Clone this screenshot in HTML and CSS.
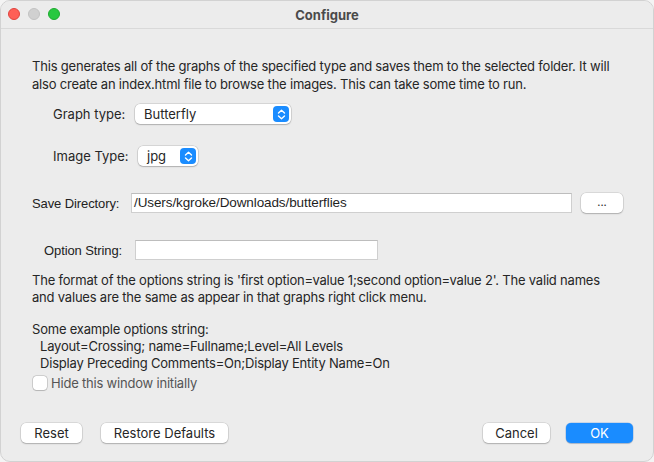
FILE: index.html
```html
<!DOCTYPE html>
<html>
<head>
<meta charset="utf-8">
<link rel="stylesheet" href="styles.css">
</head>
<body>
<div class="window">
  <div class="titlebar">
    <div class="lights">
      <span class="light red"></span>
      <span class="light gray"></span>
      <span class="light green"></span>
    </div>
    <div class="title">Configure</div>
  </div>
  <div class="content">
    <p class="intro">This generates all of the graphs of the specified type and saves them to the selected folder. It will also create an index.html file to browse the images. This can take some time to run.</p>

    <div class="row row-graph">
      <span class="label">Graph type:</span>
      <div class="popup popup-wide">
        <span class="popup-text">Butterfly</span>
        <span class="chev"><svg width="9" height="11" viewBox="0 0 9 11"><path d="M1.5 4 L4.5 1.3 L7.5 4 M1.5 7 L4.5 9.7 L7.5 7" fill="none" stroke="#fff" stroke-width="1.4" stroke-linecap="round" stroke-linejoin="round"/></svg></span>
      </div>
    </div>

    <div class="row row-image">
      <span class="label">Image Type:</span>
      <div class="popup popup-small">
        <span class="popup-text">jpg</span>
        <span class="chev"><svg width="9" height="11" viewBox="0 0 9 11"><path d="M1.5 4 L4.5 1.3 L7.5 4 M1.5 7 L4.5 9.7 L7.5 7" fill="none" stroke="#fff" stroke-width="1.4" stroke-linecap="round" stroke-linejoin="round"/></svg></span>
      </div>
    </div>

    <div class="row row-save">
      <span class="label narrow">Save Directory:</span>
      <div class="field field-path">/Users/kgroke/Downloads/butterflies</div>
      <div class="btn btn-dots">...</div>
    </div>

    <div class="row row-option">
      <span class="label narrow">Option String:</span>
      <div class="field field-option"></div>
    </div>

    <p class="desc">The format of the options string is 'first option=value 1;second option=value 2'. The valid names and values are the same as appear in that graphs right click menu.</p>

    <div class="examples">
      <div>Some example options string:</div>
      <div class="ex">Layout=Crossing; name=Fullname;Level=All Levels</div>
      <div class="ex">Display Preceding Comments=On;Display Entity Name=On</div>
    </div>

    <div class="check-row">
      <span class="checkbox"></span>
      <span class="check-label">Hide this window initially</span>
    </div>

    <div class="buttons">
      <div class="btn btn-reset">Reset</div>
      <div class="btn btn-restore">Restore Defaults</div>
      <div class="spacer"></div>
      <div class="btn btn-cancel">Cancel</div>
      <div class="btn btn-ok">OK</div>
    </div>
  </div>
</div>
</body>
</html>
```
FILE: styles.css
```css
* { box-sizing: border-box; }
html, body { margin: 0; padding: 0; }
body {
  width: 654px;
  height: 462px;
  background: #f4f4f4;
  font-family: "Inter", "Noto Sans", sans-serif;
  font-size: 13px;
  color: #262626;
  overflow: hidden;
}
.window {
  width: 654px;
  height: 462px;
  background: #ececec;
  border-radius: 10px;
  border: 1px solid #d2d2d2;
  overflow: hidden;
  display: flex;
  flex-direction: column;
}
.titlebar {
  height: 28px;
  flex: none;
  position: relative;
  display: flex;
  align-items: center;
  justify-content: center;
  border-bottom: 1px solid #d9d9d9;
  background: #ececec;
}
.lights {
  position: absolute;
  left: 7px;
  top: 7px;
  display: flex;
  gap: 8px;
}
.light {
  width: 12px;
  height: 12px;
  border-radius: 50%;
  display: block;
}
.red { background: #fe5f57; border: 0.5px solid #e0443e; }
.gray { background: #d0d0d0; border: 0.5px solid #c2c2c2; }
.green { background: #28c840; border: 0.5px solid #1eab2f; }
.title {
  font-weight: 700;
  font-size: 13px;
  color: #4a4a4a;
}
.content {
  padding: 28px 20px 0 31px;
  display: flex;
  flex-direction: column;
}
p { margin: 0; }
.intro {
  line-height: 18px;
  width: 600px;
  letter-spacing: -0.2px;
}
.row {
  display: flex;
  align-items: center;
  height: 20px;
}
.row-graph { margin-top: 11px; padding-left: 21px; }
.row-graph .label { width: 82px; }
.row-image { margin-top: 22px; padding-left: 21px; }
.row-image .label { width: 85px; }
.row-save { margin-top: 27px; }
.row-save .label { width: 99px; }
.row-option { margin-top: 27px; padding-left: 12px; }
.row-option .label { width: 91px; }
.label { flex: none; }
.narrow {
  font-family: "Liberation Sans", sans-serif;
  font-size: 13px;
  letter-spacing: -0.1px;
  color: #222;
}
.popup {
  height: 20px;
  background: #fff;
  border-radius: 5px;
  box-shadow: 0 0 0 0.5px rgba(0,0,0,0.18), 0 1px 1.5px rgba(0,0,0,0.18);
  display: flex;
  align-items: center;
  justify-content: space-between;
  padding: 0 2px 0 9px;
}
.popup-wide { width: 156px; }
.popup-small { width: 60px; }
.chev {
  width: 16px;
  height: 16px;
  background: #1a8cff;
  border-radius: 4px;
  display: flex;
  align-items: center;
  justify-content: center;
}
.chev svg { display: block; }
.field {
  height: 20px;
  background: #fff;
  border: 1px solid #cfcfcf;
  border-top-color: #bdbdbd;
  font-family: "Liberation Sans", sans-serif;
  font-size: 13.5px;
  letter-spacing: -0.1px;
  line-height: 18px;
  padding-left: 2px;
  color: #1f1f1f;
}
.field-path { width: 441px; }
.field-option { width: 243px; }
.btn {
  height: 20px;
  background: #fff;
  border-radius: 5px;
  box-shadow: 0 0 0 0.5px rgba(0,0,0,0.16), 0 1px 1.5px rgba(0,0,0,0.2);
  display: flex;
  align-items: center;
  justify-content: center;
  color: #262626;
}
.btn-dots {
  width: 42px;
  margin-left: 9px;
  font-size: 11px;
  padding-bottom: 2px;
}
.desc {
  margin-top: 12px;
  line-height: 17px;
  letter-spacing: -0.2px;
  width: 588px;
}
.examples {
  margin-top: 15px;
  line-height: 17px;
  letter-spacing: -0.2px;
}
.ex { padding-left: 8px; }
.check-row {
  margin-top: 3px;
  display: flex;
  align-items: center;
  height: 16px;
  padding-left: 1px;
}
.checkbox {
  width: 14px;
  height: 14px;
  background: #fff;
  border-radius: 3.5px;
  box-shadow: 0 0 0 0.5px rgba(0,0,0,0.25), 0 1px 1px rgba(0,0,0,0.12);
  margin-right: 4px;
}
.check-label { color: #555; letter-spacing: -0.2px; }
.buttons {
  margin-top: 32px;
  margin-left: -11px;
  display: flex;
  align-items: center;
}
.btn-reset { width: 61px; }
.btn-restore { width: 127px; margin-left: 19px; }
.spacer { flex: 1; }
.btn-cancel { width: 67px; }
.btn-ok {
  width: 67px;
  margin-left: 16px;
  background: #1a8cff;
  color: #fff;
  box-shadow: 0 0 0 0.5px rgba(0,90,200,0.3), 0 1px 1px rgba(0,0,0,0.15);
}
```
